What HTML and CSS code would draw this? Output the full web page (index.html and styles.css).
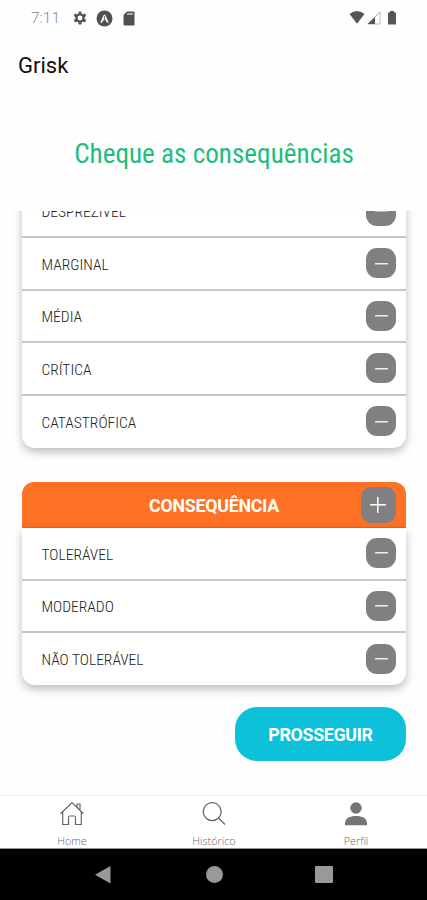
FILE: index.html
```html
<!DOCTYPE html>
<html lang="pt-BR">
<head>
<meta charset="utf-8">
<title>Grisk</title>
<link rel="stylesheet" href="styles.css">
</head>
<body>
<div class="screen">
  <header class="status">
    <span class="clock">7:11</span>
    <svg class="gear" width="14" height="15" viewBox="0 0 24 24"><path fill="#555" fill-rule="evenodd" d="M9.800 0h4.400l.7 3.700 2 1.100 3.600-1.200 2.200 3.800-2.800 2.500v2.400l2.800 2.500-2.200 3.800-3.600-1.200-2 1.100-.7 3.700H9.800l-.7-3.700-2-1.100-3.600 1.200-2.200-3.800 2.800-2.500V9.900L1.300 7.400l2.200-3.800 3.600 1.200 2-1.100zM12 7a4.200 4.200 0 1 0 0 8.400A4.200 4.200 0 0 0 12 7z"/></svg>
    <svg class="expo" width="17" height="17" viewBox="0 0 17 17"><circle cx="8.500" cy="8.500" r="8" fill="#505050"/><path d="M4.300 12.500 7.300 5.500Q8.500 3.700 9.700 5.500l3 7-1.400.5L8.500 9l-2.800 4z" fill="#eee"/><path d="M8.500 5.800v3" stroke="#777"/></svg>
    <svg class="sd" width="12" height="15" viewBox="0 0 12 15"><path d="M4 .5h6.500a1 1 0 0 1 1 1v12a1 1 0 0 1-1 1h-9a1 1 0 0 1-1-1V4z" fill="#505050"/><path d="M4 3h6" stroke="#ccc" stroke-width="1.500"/></svg>
    <svg class="signals" width="50" height="16" viewBox="0 0 50 16"><path d="M.5 4Q8-2 15.500 4L8 13.700z" fill="#555"/><path d="M31 2v12H19z" fill="#fff" stroke="#aaa" stroke-width=".8"/><path d="M31 2 18.500 14H26V7z" fill="#555"/><path d="M41 1h4v1.500h2V14.500h-8V2.500h2z" fill="#555"/></svg>
  </header>
  <div class="appbar"><h1>Grisk</h1></div>
  <h2 class="title"><span>Cheque as consequências</span></h2>
  <main class="scroll">
    <section class="card first">
      <div class="row"><span class="label">DESPREZÍVEL</span><button class="minus"></button></div>
      <div class="row"><span class="label">MARGINAL</span><button class="minus"></button></div>
      <div class="row"><span class="label">MÉDIA</span><button class="minus"></button></div>
      <div class="row"><span class="label">CRÍTICA</span><button class="minus"></button></div>
      <div class="row"><span class="label">CATASTRÓFICA</span><button class="minus"></button></div>
    </section>
    <div class="head"><span class="headtext">CONSEQUÊNCIA</span><button class="plus"></button></div>
    <section class="card second">
      <div class="row"><span class="label">TOLERÁVEL</span><button class="minus"></button></div>
      <div class="row"><span class="label">MODERADO</span><button class="minus"></button></div>
      <div class="row"><span class="label">NÃO TOLERÁVEL</span><button class="minus"></button></div>
    </section>
    <button class="go">PROSSEGUIR</button>
  </main>
  <nav class="tabs">
    <a><svg width="26" height="26" viewBox="0 0 26 26" fill="none" stroke="#666" stroke-width="1.200"><path d="M1.500 12.800 13 1.500l11.500 11.300M3.700 11v12.500h5.800V16.200q0-1.200 1.200-1.200h4.600q1.200 0 1.200 1.200v7.300h5.800V11M18 6V3h3v6"/></svg><span>Home</span></a>
    <a><svg width="26" height="26" viewBox="0 0 26 26" fill="none" stroke="#666" stroke-width="1.300"><circle cx="11.200" cy="10.700" r="9"/><path d="m17.500 17 6.500 6.500"/></svg><span>Histórico</span></a>
    <a><svg width="26" height="26" viewBox="0 0 26 26" fill="#757575"><circle cx="13" cy="7" r="5.700"/><path d="M2 24.200v-2C2 17.500 7 15 13 15s11 2.500 11 7.200v2z"/></svg><span>Perfil</span></a>
  </nav>
  <footer class="system">
    <svg width="18" height="20" viewBox="0 0 18 20"><path d="M1 9.800 16.500 1v17.600z" fill="#999"/></svg>
    <i class="dot"></i><i class="square"></i>
  </footer>
</div>
</body>
</html>
```

FILE: styles.css
```css
* { box-sizing: border-box; }
body { margin: 0; font-family: Roboto, sans-serif; background: #fefefe; }
button { border: 0; padding: 0; font: inherit; }
.screen { width: 427px; height: 900px; display: flex; flex-direction: column; overflow: hidden; }
.status { height: 36px; display: flex; align-items: center; padding: 0 28px 0 31px; flex: none; }
.clock { width: 42px; font-size: 15.500px; color: #888; font-weight: 300; }
.expo { margin-left: 9px; }
.sd { margin-left: 10px; }
.signals { margin-left: auto; }
.appbar { height: 58px; flex: none; display: flex; align-items: center; padding: 2px 0 0 18px; border-bottom: 1px solid #fafafa; }
h1 { margin: 0; font-size: 22px; font-weight: 400; line-height: 26px; color: #111; }
.title { height: 117px; flex: none; margin: 0; display: flex; justify-content: center; align-items: center; font-size: 27.150px; font-weight: 400; font-family: "Roboto Condensed", Roboto, sans-serif; font-stretch: 75%; color: #1fbd7c; padding: 3px 0 0 1px; white-space: nowrap; }
.scroll { flex: none; height: 584px; overflow: hidden; padding: 0 21px 0 22px; }
.card { background: #fff; border-radius: 0 0 13px 13px; box-shadow: 0 4px 10px rgba(0,0,0,.26); }
.first { margin-top: -25.600px; height: 263px; }
.row { height: 52.600px; display: flex; align-items: center; justify-content: space-between; border-bottom: 2px solid #c6c6c6; padding: 0 10px 0 19.500px; }
.row:last-child { border-bottom: 0; height: 51px; }
.label { font-family: "Roboto Condensed", Roboto, sans-serif; font-stretch: 75%; font-size: 15.500px; font-weight: 300; color: #222; white-space: nowrap; padding-top: 3px; }
.minus { width: 30px; height: 30px; border-radius: 11px; background: linear-gradient(#eee, #eee) center / 13px 1.500px no-repeat #808080; }
.head { margin-top: 34px; height: 45.500px; background: #ff7226; border-radius: 12px 12px 0 0; border-bottom: 1px solid #cf6b3c; display: grid; grid-template-columns: 1fr auto 1fr; align-items: center; padding: 0 10.500px 0 10.500px; }
.headtext { grid-column: 2; color: #fff; font-size: 17.800px; font-weight: 700; font-stretch: 88%; letter-spacing: -.25px; padding-top: 1px; }
.plus { justify-self: end; width: 35px; height: 36px; border-radius: 10px; background: linear-gradient(#fff, #fff) center / 16px 1.500px no-repeat, linear-gradient(#fff, #fff) center / 1.500px 16px no-repeat #808080; }
.second { height: 157.500px; }
.go { display: block; margin: 22px 0 0 auto; width: 171px; height: 54px; border-radius: 22px; background: #0ec1db; color: #fff; font-size: 17.800px; font-weight: 700; letter-spacing: -.3px; }
.tabs { height: 54px; flex: none; display: grid; grid-template-columns: 1fr 1fr 1fr; border-top: 1px solid #eee; border-bottom: 1px solid #999; background: #fff; padding-left: 1px; }
.tabs a { display: flex; flex-direction: column; align-items: center; padding-top: 5px; }
.tabs span { margin-top: 7px; font: 300 10.800px/13px "Open Sans", sans-serif; color: #666; }
.system { height: 51px; background: #000; flex: none; display: flex; align-items: center; padding-left: 94px; }
.dot { margin-left: 93.500px; width: 17px; height: 17px; border-radius: 50%; background: #999; }
.square { margin-left: 92.500px; width: 18px; height: 17px; background: #999; border-radius: 1px; }
```
